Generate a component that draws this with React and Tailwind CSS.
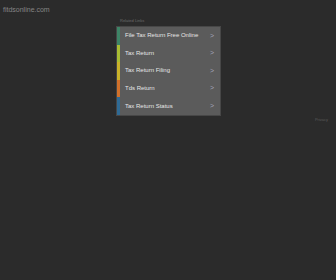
import React from "react";

const links = [
  { label: "File Tax Return Free Online", bar: "bg-[#3d8466]" },
  { label: "Tax Return", bar: "bg-[#a9bd33]" },
  { label: "Tax Return Filing", bar: "bg-[#c9b229]" },
  { label: "Tds Return", bar: "bg-[#d0702a]" },
  { label: "Tax Return Status", bar: "bg-[#2f6a94]" },
];

export default function App() {
  return (
    <div className="w-[336px] h-[280px] bg-[#2b2b2b] font-['Liberation_Sans',Arial,sans-serif] overflow-hidden">
      <div className="px-[3px] pt-[4px] text-[7px] text-[#858585] leading-[11px]">fitdsonline.com</div>
      <div className="flex justify-center pl-[1px]">
        <div className="w-[105px]">
          <div className="h-[11px] text-[4px] leading-[11px] text-[#6b6b6b] pl-[4px]">Related Links</div>
          <div className="border border-[#474747] bg-[#5b5b5b]">
            {links.map((l) => (
              <div key={l.label} className="flex items-center h-[17.6px]">
                <div className={`w-[3px] self-stretch ${l.bar}`}></div>
                <div className="flex-1 pl-[5px] text-[6px] text-[#e6e6e6] whitespace-nowrap">{l.label}</div>
                <div className="pr-[6px] text-[7px] text-[#a3a3b8]">&gt;</div>
              </div>
            ))}
          </div>
        </div>
      </div>
      <div className="flex justify-end pr-[8px] pt-[1px]">
        <span className="text-[4px] text-[#5a5a5a]">Privacy</span>
      </div>
    </div>
  );
}
